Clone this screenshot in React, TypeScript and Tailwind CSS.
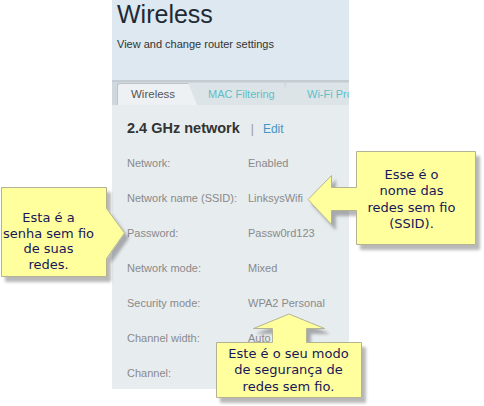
import React from "react";

type Row = { label: string; value: string };

const rows: Row[] = [
  { label: "Network:", value: "Enabled" },
  { label: "Network name (SSID):", value: "LinksysWifi" },
  { label: "Password:", value: "Passw0rd123" },
  { label: "Network mode:", value: "Mixed" },
  { label: "Security mode:", value: "WPA2 Personal" },
  { label: "Channel width:", value: "Auto" },
  { label: "Channel:", value: "Auto" },
];

function Tabs() {
  return (
    <div className="flex h-[25px] shrink-0 items-end border-t-2 border-[#c4ccd1] bg-[#cfd8dd] pl-[5px]">
      <div className="relative z-20 flex h-[22px] w-[80px] items-center rounded-tl-[3px] border-l border-t border-[#bcc5ca] bg-[#eef1f3] pl-[13px] text-[11.5px] text-[#555] [clip-path:polygon(0_0,89%_0,100%_100%,0_100%)]">
        Wireless
      </div>
      <div className="relative z-10 -ml-[9px] flex h-[22px] w-[104px] items-center bg-[#dce4e8] pl-[20px] text-[11px] text-[#5cbfc7] [clip-path:polygon(0_0,92%_0,100%_100%,0_100%)]">
        MAC Filtering
      </div>
      <div className="-ml-[6px] flex h-[22px] flex-1 items-center overflow-hidden whitespace-nowrap bg-[#dce4e8] pl-[21px] text-[11px] text-[#5cbfc7]">
        Wi-Fi Protected Setup
      </div>
    </div>
  );
}

function Panel() {
  return (
    <div className="ml-[112px] flex h-[389px] w-[237px] flex-col">
      <header className="h-[80px] shrink-0 bg-[#dde8f0] pl-[5px]">
        <h1 className="pt-[2px] text-[25px] leading-[25px] text-[#1e2a35]">Wireless</h1>
        <p className="mt-[10px] text-[11px] leading-[14px] text-[#333]">
          View and change router settings
        </p>
      </header>
      <Tabs />
      <section className="min-h-0 flex-1 overflow-hidden bg-[#e7ecef] pl-[15px]">
        <div className="mt-[14px] flex h-[20px] items-center">
          <h2 className="text-[14.5px] font-bold text-[#333]">2.4 GHz network</h2>
          <span className="ml-[11px] text-[12px] text-[#999]">|</span>
          <span className="ml-[9px] text-[12px] text-[#4596c6]">Edit</span>
        </div>
        <ul className="mt-[7px]">
          {rows.map((row) => (
            <li key={row.label} className="flex h-[35px] items-center text-[11px] text-[#8a8a8a]">
              <span className="w-[121px]">{row.label}</span>
              <span>{row.value}</span>
            </li>
          ))}
        </ul>
      </section>
    </div>
  );
}

function Callouts() {
  return (
    <>
      <svg className="pointer-events-none absolute inset-0" width="484" height="406">
        <defs>
          <filter id="sh" x="-20%" y="-20%" width="140%" height="140%">
            <feDropShadow dx="4" dy="5" stdDeviation="1.5" floodColor="#000" floodOpacity="0.28" />
          </filter>
        </defs>
        <g fill="#ffff9d" stroke="#b3b394" strokeWidth="1" filter="url(#sh)">
          <polygon points="1.5,187.5 106.5,187.5 106.5,208.5 124.5,233 106.5,258.5 106.5,276.5 1.5,276.5" />
          <polygon points="356.5,151.5 475.5,151.5 475.5,244.5 356.5,244.5 356.5,210.5 331.5,210.5 331.5,224.5 308,199.5 331.5,175.5 331.5,187.5 356.5,187.5" />
          <polygon points="216.5,342.5 272.5,342.5 272.5,328.5 253.5,328.5 289,314 324.5,328.5 306.5,328.5 306.5,342.5 361.5,342.5 361.5,397.5 216.5,397.5" />
        </g>
      </svg>
      <div className="absolute left-[1px] top-[187px] flex h-[89px] w-[105px] flex-col items-center pr-[10px] pt-[23px] text-center text-[13px] leading-[15.5px] text-[#17175a]">
        <span>Esta é a</span>
        <span>senha sem fio</span>
        <span>de suas</span>
        <span>redes.</span>
      </div>
      <div className="absolute left-[356px] top-[151px] flex h-[93px] w-[119px] flex-col items-center justify-center pr-[8px] pt-[4px] text-center text-[13px] leading-[16.5px] text-[#17175a]">
        <span>Esse é o</span>
        <span>nome das</span>
        <span>redes sem fio</span>
        <span>(SSID).</span>
      </div>
      <div className="absolute left-[216px] top-[342px] flex h-[55px] w-[145px] flex-col items-center justify-center pt-[2px] text-center text-[13px] leading-[16.5px] text-[#17175a]">
        <span>Este é o seu modo</span>
        <span>de segurança de</span>
        <span>redes sem fio.</span>
      </div>
    </>
  );
}

export default function App() {
  return (
    <div className="relative h-[406px] w-[484px] overflow-hidden bg-white font-['Liberation_Sans',Arial,sans-serif]">
      <Panel />
      <div className="font-['DejaVu_Sans',Verdana,sans-serif]">
        <Callouts />
      </div>
    </div>
  );
}
